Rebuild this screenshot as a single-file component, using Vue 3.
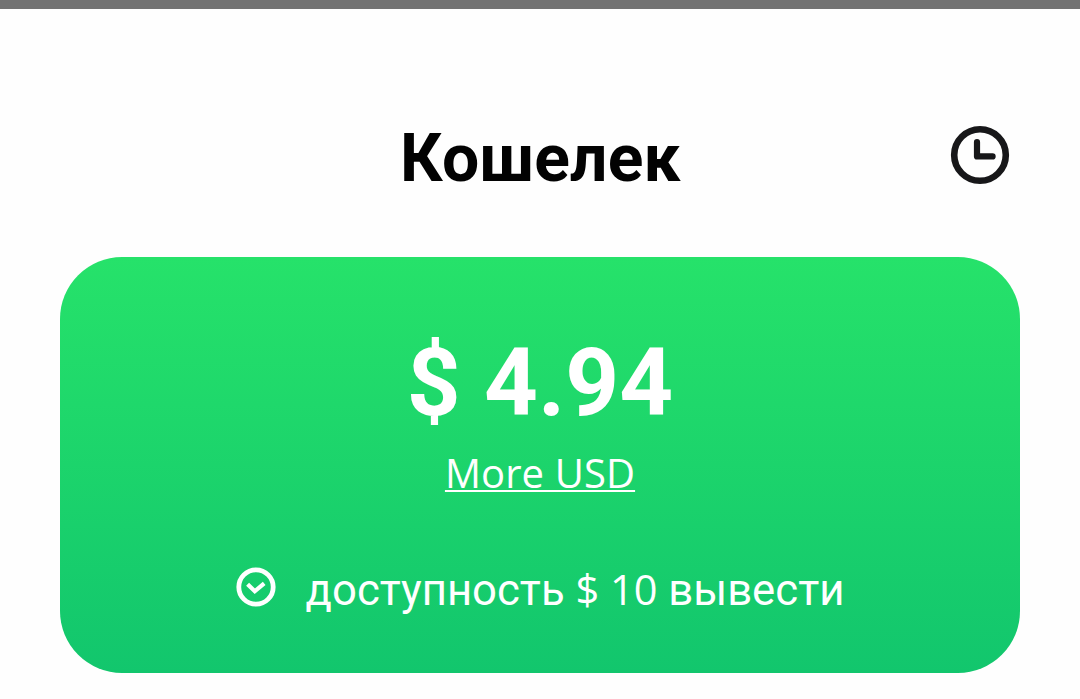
<template>
  <div class="page">
    <div class="status-bar"></div>

    <header class="header">
      <h1 class="title">Кошелек</h1>
      <button class="history" aria-label="История">
        <svg viewBox="0 0 60 60" fill="none">
          <circle cx="30" cy="30" r="25.8" stroke="#171719" stroke-width="6.6" />
          <path d="M27 17.2V31.4H42.6" stroke="#171719" stroke-width="6.2" stroke-linecap="round" stroke-linejoin="round" />
        </svg>
      </button>
    </header>

    <section class="card">
      <div class="balance">$ {{ balance }}</div>
      <a class="currency">More USD</a>
      <div class="available">
        <svg class="check" viewBox="0 0 40 40" fill="none">
          <circle cx="20" cy="20" r="17.2" stroke="#fff" stroke-width="4.8" />
          <path d="M11.6 17.2L18.8 24.2L28.2 16.4" stroke="#fff" stroke-width="4.2" />
        </svg>
        <span class="available-text">доступность <span class="amount">$ {{ minimum }}</span> вывести</span>
      </div>
    </section>
  </div>
</template>

<script setup>
import { ref } from "vue";

const balance = ref("4.94");
const minimum = ref(10);
</script>

<style>
body {
  margin: 0;
  background: #fefefe;
}
</style>

<style scoped>
.page {
  height: 699px;
  overflow: hidden;
  background: #fefefe;
  font-family: Roboto, sans-serif;
}

.status-bar {
  height: 9px;
  background: #737373;
}

.header {
  display: grid;
  grid-template-columns: 1fr auto 1fr;
  align-items: center;
  height: 248px;
  padding: 0 70px;
  box-sizing: border-box;
}

.title {
  grid-column: 2;
  margin: 52px 0 0 1px;
  font-size: 66px;
  line-height: 78px;
  font-weight: 700;
  letter-spacing: 0.2px;
  color: #020202;
}

.history {
  justify-self: end;
  width: 60px;
  height: 60px;
  margin-top: 44px;
  padding: 0;
  border: 0;
  background: none;
}

.history svg {
  display: block;
}

.card {
  display: flex;
  flex-direction: column;
  align-items: center;
  height: 416px;
  margin: 0 60px;
  padding-top: 71px;
  box-sizing: border-box;
  border-radius: 62px;
  background: linear-gradient(#26e26a, #12c66d);
  color: #fff;
}

.balance {
  font-size: 94px;
  line-height: 110px;
  font-weight: 700;
}

.currency {
  margin-top: 8px;
  font-family: "Open Sans", sans-serif;
  font-size: 40px;
  line-height: 54px;
  letter-spacing: 0.1px;
  text-decoration: underline;
  text-decoration-thickness: 2px;
  text-underline-offset: 2px;
}

.available {
  display: flex;
  align-items: center;
  gap: 30px;
  margin-top: 64px;
  font-size: 43.7px;
  line-height: 50px;
  white-space: nowrap;
}

.check {
  width: 40px;
  height: 40px;
  margin-bottom: 6px;
}

.amount {
  font-family: "Open Sans", sans-serif;
  font-size: 41.5px;
  font-weight: 500;
}
</style>
